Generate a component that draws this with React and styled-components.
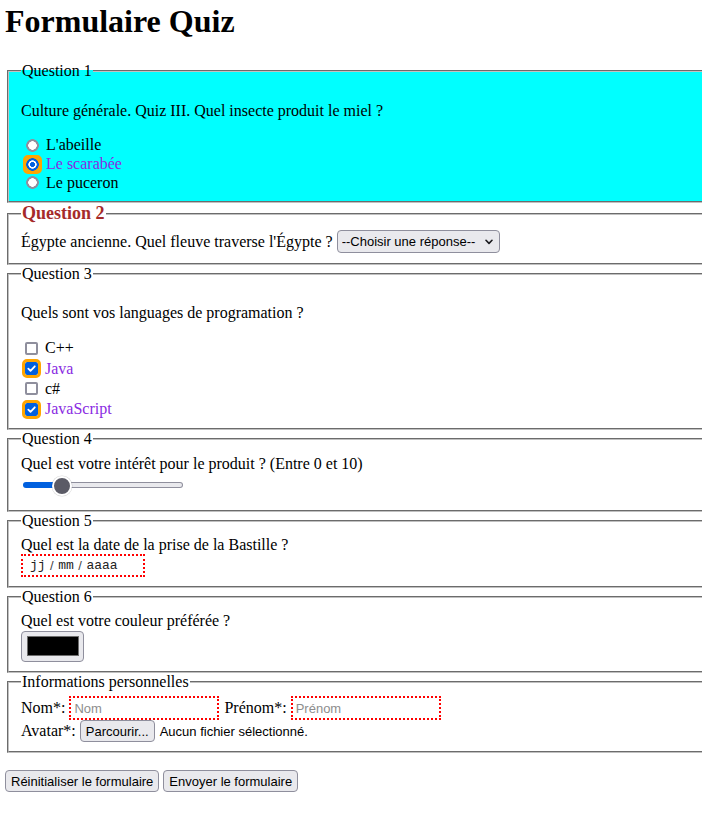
import React, { useState } from 'react';
import styled, { createGlobalStyle } from 'styled-components';

const GlobalStyle = createGlobalStyle`
  body {
    margin: 3px 0 8px 5px;
    font-family: "Liberation Serif", "Times New Roman", serif;
    font-size: 16px;
    color: #000;
    background: #fff;
  }
`;

const Page = styled.div`
  overflow: hidden;
`;

const Title = styled.h1`
  margin: 0 0 22.4px;
  font-size: 32px;
  font-weight: bold;
`;

const Fieldset = styled.fieldset`
  min-width: 0;
  margin: 0 -40px 0 2px;
  padding: 5.6px 12px 9px;
  border: 2px groove #c0c0c0;
  background: ${(p) => p.$bg || 'transparent'};
`;

const Legend = styled.legend`
  padding: 0 1px;
  font-size: ${(p) => (p.$accent ? '18px' : '16px')};
  font-weight: ${(p) => (p.$accent ? 'bold' : 'normal')};
  color: ${(p) => (p.$accent ? '#a52a2a' : '#000')};
`;

const Prompt = styled.p`
  margin: 16px 0;
`;

const Line = styled.div`
  line-height: ${(p) => p.$lh || 'normal'};
`;

const OptionRow = styled.div`
  display: flex;
  align-items: center;
  height: ${(p) => p.$h}px;
`;

const OptionLabel = styled.label`
  margin-left: 4px;
  color: ${(p) => (p.$checked ? 'blueviolet' : '#000')};
`;

const Radio = styled.input.attrs({ type: 'radio' })`
  -webkit-appearance: none;
  appearance: none;
  flex: none;
  width: 13px;
  height: 13px;
  margin: 0 3px 0 5px;
  border: 0;
  border-radius: 2px;
  background: radial-gradient(circle closest-side, #fff 0 4px, #8f8f9d 4.5px 6px, rgba(143, 143, 157, 0) 6.6px);
  &:checked {
    background: radial-gradient(circle closest-side, #0060df 0 2.2px, #fff 2.7px 3.9px, #0060df 4.4px 6px, #ffa500 6.5px);
    outline: 3px solid #ffa500;
  }
`;

const CheckWrap = styled.span`
  position: relative;
  display: inline-flex;
  flex: none;
  margin: 0 3px 0 4px;
`;

const Checkbox = styled.input.attrs({ type: 'checkbox' })`
  -webkit-appearance: none;
  appearance: none;
  box-sizing: border-box;
  width: 13px;
  height: 13px;
  margin: 0;
  border: 2px solid #8f8f9d;
  border-radius: 2px;
  background: #fff;
  &:checked {
    background: #0060df;
    border-color: #0060df;
    outline: 3px solid #ffa500;
  }
`;

const CheckMark = styled.svg`
  position: absolute;
  left: 0;
  top: 0;
  width: 13px;
  height: 13px;
  pointer-events: none;
`;

const QuestionRow = styled.div`
  display: flex;
  align-items: center;
  gap: 4px;
  height: ${(p) => p.$h}px;
`;

const SelectWrap = styled.span`
  position: relative;
  display: inline-flex;
`;

const Select = styled.select`
  -webkit-appearance: none;
  appearance: none;
  box-sizing: border-box;
  width: 163px;
  height: 23px;
  margin: 0;
  padding: 0 20px 0 4px;
  border: 1px solid #8f8f9d;
  border-radius: 4px;
  background: #e9e9ed;
  color: #000;
  font: 13px "Liberation Sans", Arial, sans-serif;
`;

const Chevron = styled.svg`
  position: absolute;
  right: 7px;
  top: 50%;
  margin-top: -3px;
  width: 8px;
  height: 6px;
  pointer-events: none;
`;

const Range = styled.input.attrs({ type: 'range' })`
  -webkit-appearance: none;
  appearance: none;
  display: block;
  width: 160px;
  height: 20px;
  margin: 2px 0 6px 2px;
  padding: 0;
  background: transparent;
  &::-webkit-slider-runnable-track {
    height: 6px;
    border-radius: 4px;
    border: 1px solid transparent;
    background:
      linear-gradient(to right, #0060df var(--fill), transparent var(--fill)) border-box,
      linear-gradient(#e9e9ed, #e9e9ed) padding-box,
      linear-gradient(#8f8f9d, #8f8f9d) border-box;
  }
  &::-webkit-slider-thumb {
    -webkit-appearance: none;
    appearance: none;
    box-sizing: border-box;
    width: 20px;
    height: 20px;
    margin-top: -7px;
    border-radius: 50%;
    border: 2px solid #fff;
    background: #5b5b66;
    box-shadow: 0 0 0 0.5px rgba(0, 0, 0, 0.15);
  }
`;

const DateBox = styled.div`
  display: flex;
  align-items: center;
  box-sizing: border-box;
  width: 124px;
  height: 23px;
  padding-left: 7px;
  border: 2px dotted #ff0000;
  font-family: "Liberation Mono", "Courier New", monospace;
  font-size: 13px;
  color: #222;
`;

const DateSep = styled.span`
  margin: 0 4.5px;
  font-family: "Liberation Sans", Arial, sans-serif;
  color: #444;
`;

const ColorInput = styled.input.attrs({ type: 'color' })`
  display: block;
  box-sizing: border-box;
  width: 63px;
  height: 31px;
  margin: 0;
  padding: 0;
  border: 1px solid #8f8f9d;
  border-radius: 4px;
  background: #e9e9ed;
  &::-webkit-color-swatch-wrapper {
    padding: 4.5px 4.5px;
  }
  &::-webkit-color-swatch {
    border: 1px solid #6d6d6d;
    border-radius: 0;
  }
`;

const TextField = styled.input.attrs({ type: 'text' })`
  box-sizing: border-box;
  width: 150px;
  height: 24px;
  margin: 0;
  padding: 1px 3px;
  border: 2px dotted #ff0000;
  background: #fff;
  font: 13px "Liberation Sans", Arial, sans-serif;
  &::placeholder {
    color: #8d8d8d;
    opacity: 1;
  }
`;

const FieldLabel = styled.label`
  margin-left: ${(p) => (p.$shift ? '1px' : '0')};
`;

const Button = styled.button`
  box-sizing: border-box;
  display: inline-flex;
  align-items: center;
  height: 22px;
  margin: 0;
  padding: 0 5px;
  border: 1px solid #8f8f9d;
  border-radius: 4px;
  background: #e9e9ed;
  color: #000;
  font: 13px "Liberation Sans", Arial, sans-serif;
  white-space: nowrap;
`;

const FileStatus = styled.span`
  margin-left: 1px;
  font: 13px "Liberation Sans", Arial, sans-serif;
`;

const HiddenFile = styled.input.attrs({ type: 'file' })`
  display: none;
`;

const ButtonBar = styled.div`
  display: flex;
  gap: 4px;
  margin-top: 16.6px;
`;

const radioOptions = [
  { id: 'abeille', label: "L'abeille" },
  { id: 'scarabee', label: 'Le scarabée' },
  { id: 'puceron', label: 'Le puceron' },
];

const langOptions = [
  { id: 'cpp', label: 'C++' },
  { id: 'java', label: 'Java' },
  { id: 'csharp', label: 'c#' },
  { id: 'js', label: 'JavaScript' },
];

export default function App() {
  const [insect, setInsect] = useState('scarabee');
  const [langs, setLangs] = useState({ cpp: false, java: true, csharp: false, js: true });
  const [interest, setInterest] = useState(2);

  const thumb = 20;
  const trackWidth = 158;
  const fill = thumb / 2 + (interest / 10) * (trackWidth - thumb) + 1;

  return (
    <Page>
      <GlobalStyle />
      <Title>Formulaire Quiz</Title>
      <form onSubmit={(e) => e.preventDefault()}>
        <Fieldset $bg="#00ffff">
          <Legend>Question 1</Legend>
          <Prompt>Culture générale. Quiz III. Quel insecte produit le miel ?</Prompt>
          {radioOptions.map((o) => (
            <OptionRow key={o.id} $h={18.7}>
              <Radio
                id={o.id}
                name="insecte"
                checked={insect === o.id}
                onChange={() => setInsect(o.id)}
              />
              <OptionLabel htmlFor={o.id} $checked={insect === o.id}>
                {o.label}
              </OptionLabel>
            </OptionRow>
          ))}
        </Fieldset>

        <Fieldset>
          <Legend $accent>Question 2</Legend>
          <QuestionRow $h={24}>
            <label htmlFor="fleuve">Égypte ancienne. Quel fleuve traverse l'Égypte ?</label>
            <SelectWrap>
              <Select id="fleuve" defaultValue="">
                <option value="">--Choisir une réponse--</option>
                <option value="nil">Le Nil</option>
                <option value="tigre">Le Tigre</option>
                <option value="euphrate">L'Euphrate</option>
              </Select>
              <Chevron viewBox="0 0 8 6">
                <path d="M1 1.3 L4 4.4 L7 1.3" fill="none" stroke="#1b1b1f" strokeWidth="1.6" strokeLinecap="round" strokeLinejoin="round" />
              </Chevron>
            </SelectWrap>
          </QuestionRow>
        </Fieldset>

        <Fieldset>
          <Legend>Question 3</Legend>
          <Prompt>Quels sont vos languages de programation ?</Prompt>
          {langOptions.map((o) => (
            <OptionRow key={o.id} $h={20.25}>
              <CheckWrap>
                <Checkbox
                  id={o.id}
                  checked={langs[o.id]}
                  onChange={() => setLangs((s) => ({ ...s, [o.id]: !s[o.id] }))}
                />
                {langs[o.id] && (
                  <CheckMark viewBox="0 0 13 13">
                    <path d="M3.3 6.7 L5.5 8.9 L9.8 4.3" fill="none" stroke="#fff" strokeWidth="1.8" strokeLinecap="round" strokeLinejoin="round" />
                  </CheckMark>
                )}
              </CheckWrap>
              <OptionLabel htmlFor={o.id} $checked={langs[o.id]}>
                {o.label}
              </OptionLabel>
            </OptionRow>
          ))}
        </Fieldset>

        <Fieldset>
          <Legend>Question 4</Legend>
          <Line $lh="19.4px">
            <label htmlFor="interet">Quel est votre intérêt pour le produit ? (Entre 0 et 10)</label>
          </Line>
          <Range
            id="interet"
            min="0"
            max="10"
            value={interest}
            onChange={(e) => setInterest(Number(e.target.value))}
            style={{ '--fill': `${fill}px` }}
          />
        </Fieldset>

        <Fieldset>
          <Legend>Question 5</Legend>
          <Line>Quel est la date de la prise de la Bastille ?</Line>
          <DateBox role="textbox" aria-label="Date">
            <span>jj</span>
            <DateSep>/</DateSep>
            <span>mm</span>
            <DateSep>/</DateSep>
            <span>aaaa</span>
          </DateBox>
        </Fieldset>

        <Fieldset>
          <Legend>Question 6</Legend>
          <Line $lh="19.4px">
            <label htmlFor="couleur">Quel est votre couleur préférée ?</label>
          </Line>
          <ColorInput id="couleur" defaultValue="#000000" />
        </Fieldset>

        <Fieldset>
          <Legend>Informations personnelles</Legend>
          <QuestionRow $h={24}>
            <FieldLabel htmlFor="nom">Nom*:</FieldLabel>
            <TextField id="nom" placeholder="Nom" />
            <FieldLabel htmlFor="prenom" $shift>Prénom*:</FieldLabel>
            <TextField id="prenom" placeholder="Prénom" />
          </QuestionRow>
          <QuestionRow $h={22}>
            <span>Avatar*:</span>
            <Button as="label" htmlFor="avatar">
              Parcourir...
            </Button>
            <HiddenFile id="avatar" />
            <FileStatus>Aucun fichier sélectionné.</FileStatus>
          </QuestionRow>
        </Fieldset>

        <ButtonBar>
          <Button type="reset">Réinitialiser le formulaire</Button>
          <Button type="submit">Envoyer le formulaire</Button>
        </ButtonBar>
      </form>
    </Page>
  );
}
